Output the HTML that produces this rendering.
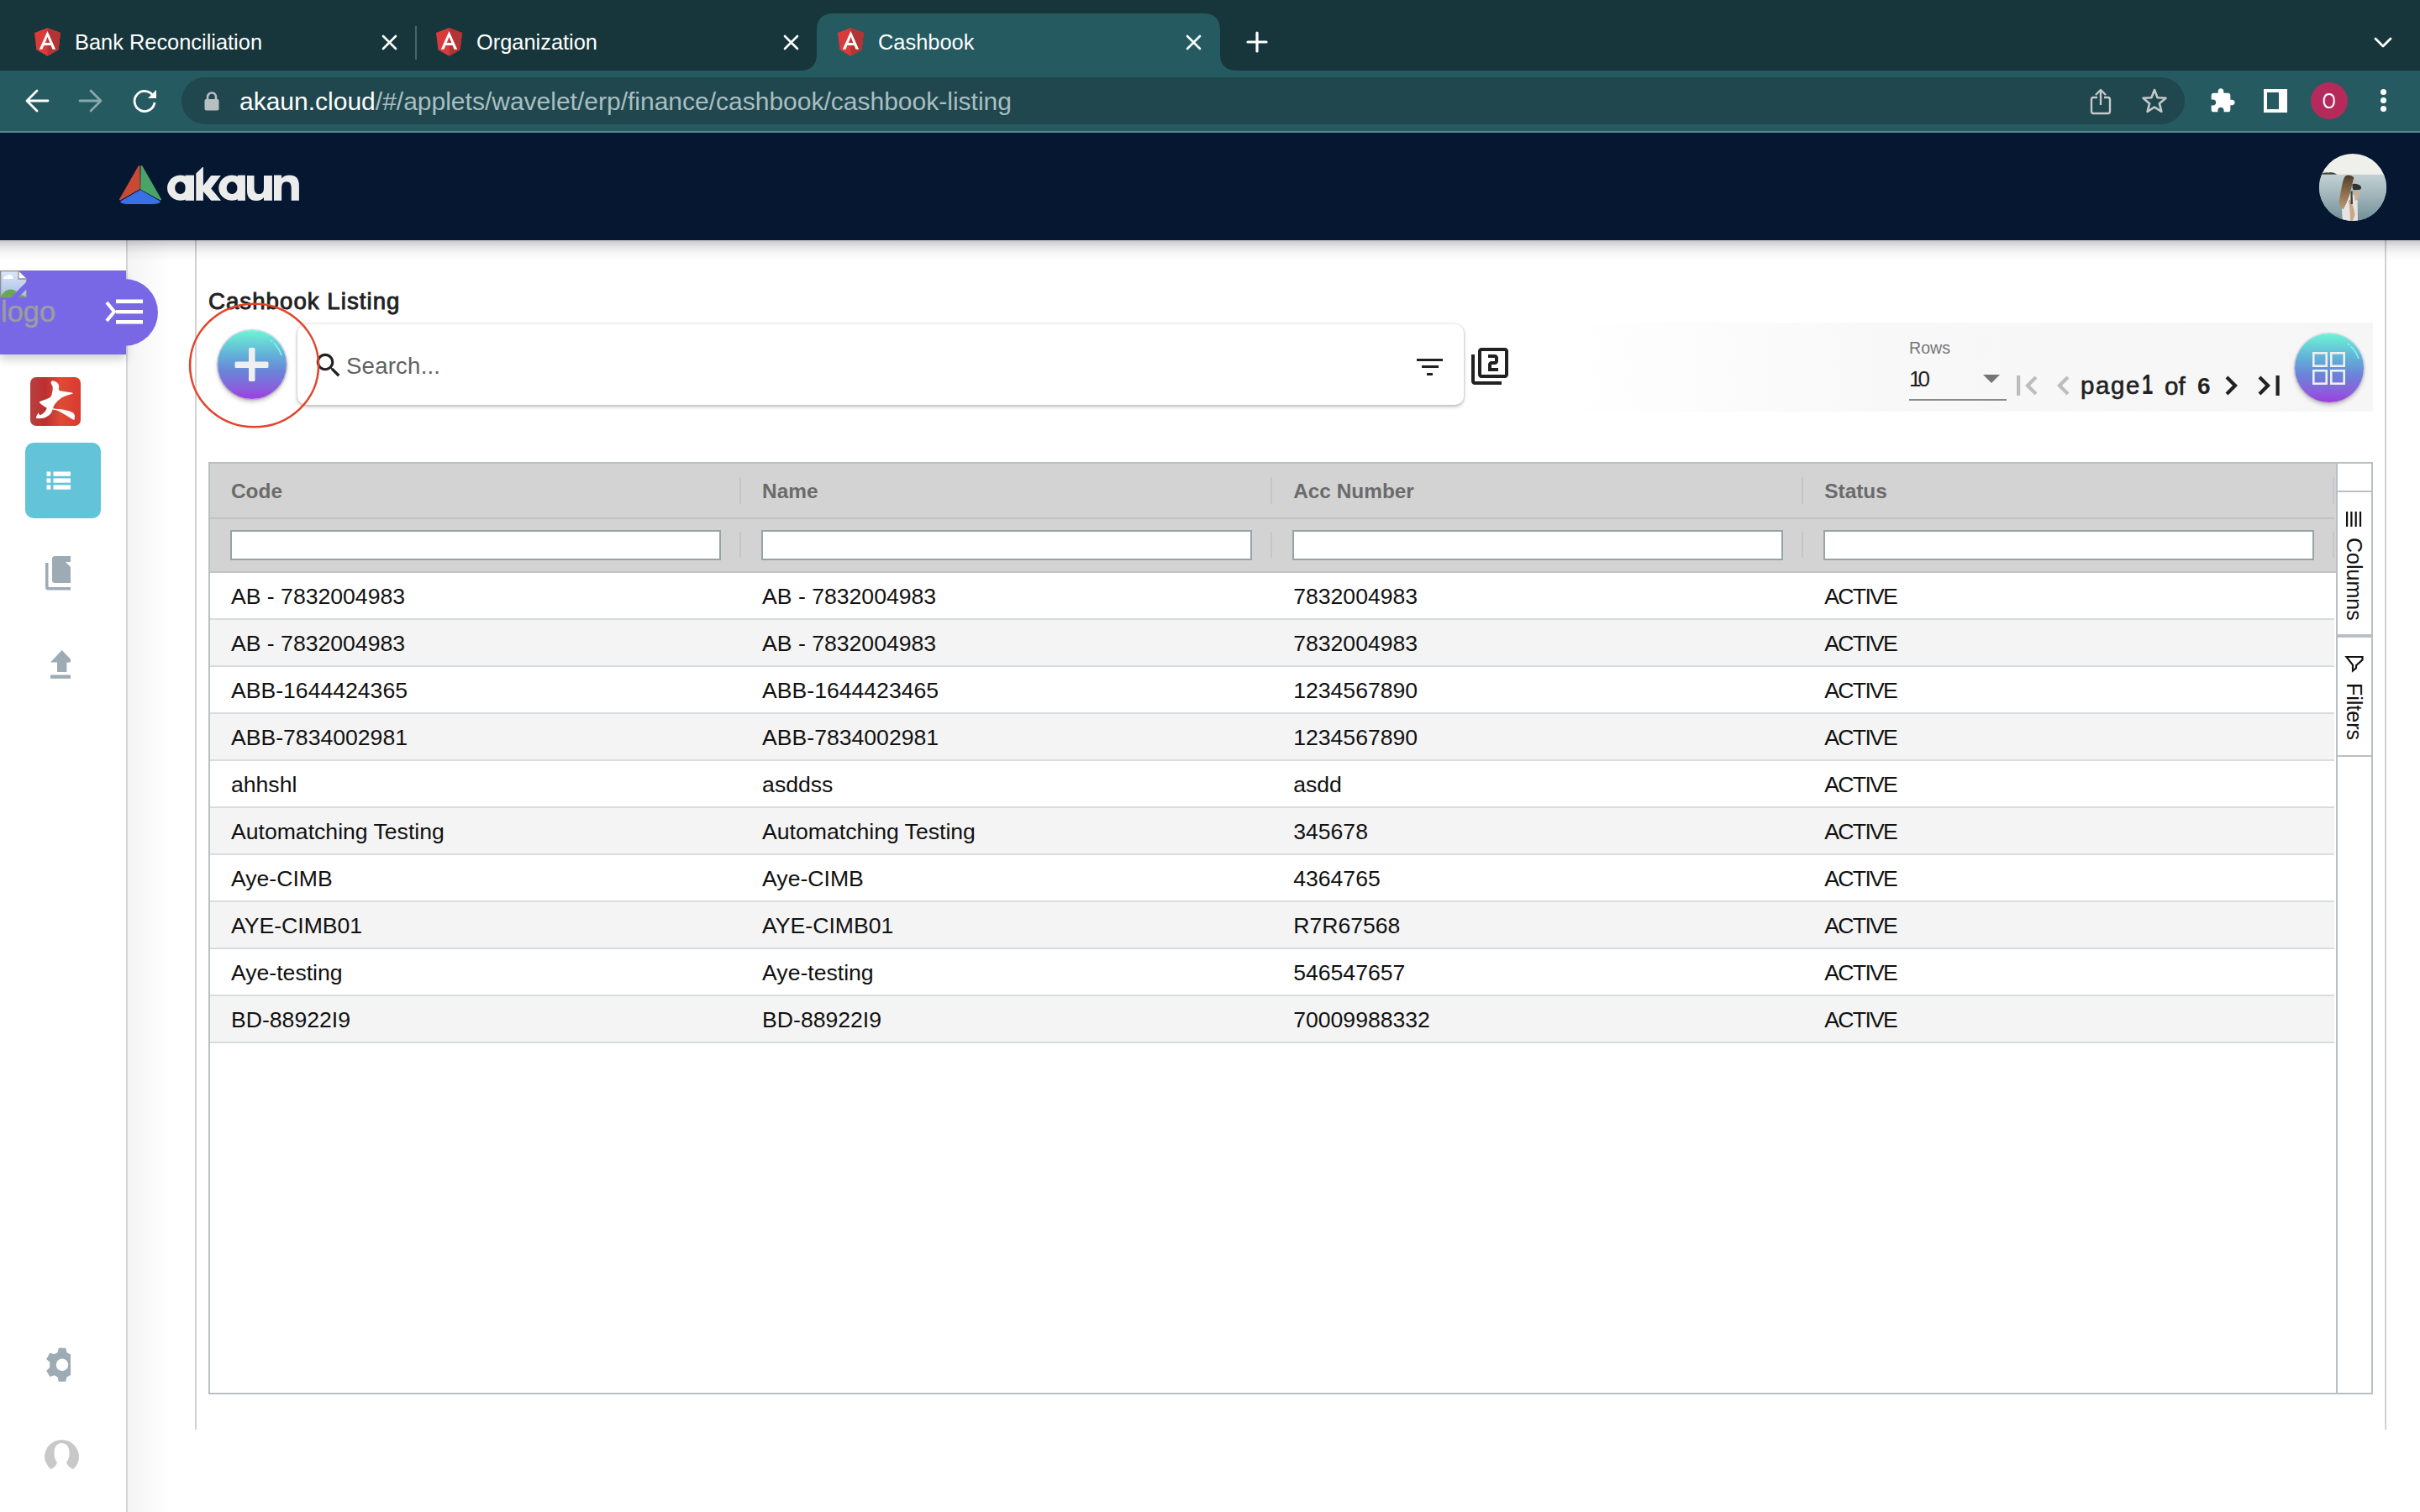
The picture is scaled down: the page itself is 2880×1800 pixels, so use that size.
<!DOCTYPE html>
<html>
<head>
<meta charset="utf-8">
<style>
*{box-sizing:border-box;margin:0;padding:0}
html,body{width:2880px;height:1800px;overflow:hidden;background:#fff;font-family:"Liberation Sans",sans-serif}
.abs{position:absolute}
/* chrome */
#tabbar{left:0;top:0;width:2880px;height:84px;background:#17363b}
#toolbar{left:0;top:84px;width:2880px;height:72px;background:#255a61}
#tbline{left:0;top:156px;width:2880px;height:2px;background:#4f8a90}
.tabtitle{color:#fff;font-size:25.4px;white-space:nowrap;line-height:1}
#urlpill{left:216px;top:92px;width:2384px;height:56px;border-radius:28px;background:#20474e}
#urltext{left:285px;top:106px;font-size:30px;line-height:1;white-space:nowrap;color:#a9bec1}
#urltext b{font-weight:normal;color:#fff}
/* app header */
#apphdr{left:0;top:158px;width:2880px;height:128px;background:#061731}
#hdrshadow{left:0;top:286px;width:2880px;height:26px;background:linear-gradient(rgba(0,0,0,0.22),rgba(0,0,0,0.1) 30%,rgba(0,0,0,0.03) 60%,rgba(0,0,0,0))}
/* sidebar */
#sidebar{left:0;top:286px;width:150px;height:1514px;background:#fff}
#sbborder{left:150px;top:286px;width:2px;height:1514px;background:#d6d6d6}
#sbinner{left:152px;top:286px;width:50px;height:1514px;background:linear-gradient(90deg,#f4f4f4,rgba(255,255,255,0))}
#cardL{left:232px;top:286px;width:2px;height:1416px;background:#d2d2d2}
#cardR{left:2838px;top:286px;width:2px;height:1416px;background:#d2d2d2}
</style>
</head>
<body>
<div class="abs" id="tabbar"></div>
<div class="abs" id="toolbar"></div>
<div class="abs" id="tbline"></div>
<div class="abs" id="urlpill"></div>
<div class="abs" id="urltext"><b>akaun.cloud</b>/#/applets/wavelet/erp/finance/cashbook/cashbook-listing</div>


<!-- active tab -->
<svg class="abs" style="left:952px;top:16px" width="520" height="68" viewBox="0 0 520 68"><path fill="#255a61" d="M0 68 Q20 68 20 48 L20 20 Q20 0 40 0 L480 0 Q500 0 500 20 L500 48 Q500 68 520 68 Z"/></svg>
<svg class="abs" style="left:41px;top:33px" width="31" height="34" viewBox="31.9 30 186.2 200"><polygon fill="#d93b3b" points="125,30 31.9,63.2 46.1,186.3 125,230 203.9,186.3 218.1,63.2"/><polygon fill="#b33434" points="125,30 125,230 203.9,186.3 218.1,63.2"/><path fill="#fff" d="M125,52.1L66.8,182.6h21.7l11.7-29.2h49.4l11.7,29.2H183L125,52.1z M142,135.4H108l17-40.9L142,135.4z"/></svg><svg class="abs" style="left:519px;top:33px" width="31" height="34" viewBox="31.9 30 186.2 200"><polygon fill="#d93b3b" points="125,30 31.9,63.2 46.1,186.3 125,230 203.9,186.3 218.1,63.2"/><polygon fill="#b33434" points="125,30 125,230 203.9,186.3 218.1,63.2"/><path fill="#fff" d="M125,52.1L66.8,182.6h21.7l11.7-29.2h49.4l11.7,29.2H183L125,52.1z M142,135.4H108l17-40.9L142,135.4z"/></svg><svg class="abs" style="left:997px;top:33px" width="31" height="34" viewBox="31.9 30 186.2 200"><polygon fill="#d93b3b" points="125,30 31.9,63.2 46.1,186.3 125,230 203.9,186.3 218.1,63.2"/><polygon fill="#b33434" points="125,30 125,230 203.9,186.3 218.1,63.2"/><path fill="#fff" d="M125,52.1L66.8,182.6h21.7l11.7-29.2h49.4l11.7,29.2H183L125,52.1z M142,135.4H108l17-40.9L142,135.4z"/></svg>
<div class="abs tabtitle" style="left:89px;top:38px">Bank Reconciliation</div>
<div class="abs tabtitle" style="left:567px;top:38px">Organization</div>
<div class="abs tabtitle" style="left:1045px;top:38px">Cashbook</div>
<svg class="abs" style="left:454px;top:41px" width="19" height="19" viewBox="0 0 19 19"><path d="M2 2L17 17M17 2L2 17" stroke="#fff" stroke-width="2.6" stroke-linecap="round"/></svg><svg class="abs" style="left:932px;top:41px" width="19" height="19" viewBox="0 0 19 19"><path d="M2 2L17 17M17 2L2 17" stroke="#fff" stroke-width="2.6" stroke-linecap="round"/></svg><svg class="abs" style="left:1411px;top:41px" width="19" height="19" viewBox="0 0 19 19"><path d="M2 2L17 17M17 2L2 17" stroke="#fff" stroke-width="2.6" stroke-linecap="round"/></svg>
<div class="abs" style="left:494px;top:31px;width:2px;height:40px;background:#4a6469"></div>
<svg class="abs" style="left:1482px;top:37px" width="28" height="26" viewBox="0 0 28 26"><path d="M14 2V24M3 13H25" stroke="#fff" stroke-width="3.2" stroke-linecap="round"/></svg>
<svg class="abs" style="left:2825px;top:43px" width="22" height="15" viewBox="0 0 22 15"><path d="M2 3L11 12L20 3" stroke="#fff" stroke-width="2.8" fill="none" stroke-linecap="round" stroke-linejoin="round"/></svg>
<!-- nav -->
<svg class="abs" style="left:29px;top:105px" width="30" height="30" viewBox="0 0 30 30"><path d="M28 15H4M15 3L3 15L15 27" stroke="#fff" stroke-width="2.8" fill="none" stroke-linecap="round" stroke-linejoin="round"/></svg>
<svg class="abs" style="left:93px;top:105px" width="30" height="30" viewBox="0 0 30 30"><path d="M2 15H26M15 3L27 15L15 27" stroke="#8aa8ac" stroke-width="2.8" fill="none" stroke-linecap="round" stroke-linejoin="round"/></svg>
<svg class="abs" style="left:157px;top:105px" width="32" height="30" viewBox="0 0 32 30"><path d="M25.5 9.5A12 12 0 1 0 27 17" stroke="#fff" stroke-width="2.8" fill="none"/><path d="M29 2V12H19Z" fill="#fff"/></svg>
<svg class="abs" style="left:243px;top:109px" width="18" height="23" viewBox="0 0 18 23"><path d="M4 10V6.5A5 5 0 0 1 14 6.5V10" stroke="#b8bfc2" stroke-width="2.6" fill="none"/><rect x="0.5" y="9" width="17" height="13.5" rx="2" fill="#b8bfc2"/></svg>
<!-- right toolbar icons -->
<svg class="abs" style="left:2487px;top:105px" width="26" height="32" viewBox="0 0 26 32"><path d="M9 11H4.5Q2 11 2 13.5V27.5Q2 30 4.5 30H21.5Q24 30 24 27.5V13.5Q24 11 21.5 11H17" stroke="#c4c9ca" stroke-width="2.4" fill="none"/><path d="M13 20V2M7 8L13 2L19 8" stroke="#c4c9ca" stroke-width="2.4" fill="none" stroke-linejoin="round"/></svg>
<svg class="abs" style="left:2548px;top:104px" width="32" height="32" viewBox="0 0 32 32"><path d="M16 3L19.6 12.2L29.5 12.8L21.9 19.2L24.4 28.8L16 23.5L7.6 28.8L10.1 19.2L2.5 12.8L12.4 12.2Z" stroke="#c4c9ca" stroke-width="2.6" fill="none" stroke-linejoin="round"/></svg>
<svg class="abs" style="left:2629px;top:104px" width="32" height="32" viewBox="0 0 24 24"><path fill="#fff" d="M20.5 11H19V7c0-1.1-.9-2-2-2h-4V3.5C13 2.12 11.88 1 10.5 1S8 2.12 8 3.5V5H4c-1.1 0-1.99.9-1.99 2v3.8H3.5c1.49 0 2.7 1.21 2.7 2.7s-1.21 2.7-2.7 2.7H2V20c0 1.1.9 2 2 2h3.8v-1.5c0-1.49 1.21-2.7 2.7-2.7 1.49 0 2.7 1.21 2.7 2.7V22H17c1.1 0 2-.9 2-2v-4h1.5c1.38 0 2.5-1.12 2.5-2.5S21.88 11 20.5 11z"/></svg>
<div class="abs" style="left:2694px;top:106px;width:28px;height:28px;border:4px solid #fff;background:#255a61"></div>
<div class="abs" style="left:2712px;top:106px;width:10px;height:28px;background:#fff"></div>
<div class="abs" style="left:2750px;top:98px;width:44px;height:44px;border-radius:50%;background:#b52a5b;color:#fff;font-size:25px;line-height:44px;text-align:center"><span style="display:inline-block;transform:scaleX(0.82)">O</span></div>
<div class="abs" style="left:2833px;top:106px;width:7px;height:7px;border-radius:50%;background:#fff"></div>
<div class="abs" style="left:2833px;top:116px;width:7px;height:7px;border-radius:50%;background:#fff"></div>
<div class="abs" style="left:2833px;top:126px;width:7px;height:7px;border-radius:50%;background:#fff"></div>

<div class="abs" id="apphdr"></div>
<svg class="abs" style="left:135px;top:190px" width="232" height="60" viewBox="0 0 232 60">
<path fill="#c64a35" stroke="#c64a35" stroke-width="2" stroke-linejoin="round" d="M30.5 8 L8 47.5 L30.8 34.3 Z"/>
<path fill="#4aa468" stroke="#4aa468" stroke-width="2" stroke-linejoin="round" d="M33.5 8 L56 47.5 L33.2 34.8 Z"/>
<path fill="#3870e5" stroke="#3870e5" stroke-width="2.4" stroke-linejoin="round" d="M9.5 50.2 L32 37.2 L54.5 50.2 Q52 51.8 48 51.8 L16 51.8 Q12 51.8 9.5 50.2 Z"/>
<g transform="translate(60,0)" fill="#ececec">
<path fill-rule="evenodd" d="M35.6 33.7 A15.8 15.1 0 1 1 35.6 33.69 Z M26 33.7 A6.4 7.4 0 1 0 26 33.71 Z"/>
<rect x="25.6" y="18.6" width="10.4" height="30.2"/>
<path d="M38.3 16.5 L46 9 L46.9 9 L46.9 30.9 L56.2 19 L67.8 19 L56.2 34.4 L68.1 48.8 L56.2 48.8 L46.9 37.9 L46.9 48.8 L38.3 48.8 Z"/>
<path fill-rule="evenodd" d="M96.8 33.7 A15.8 15.1 0 1 1 96.8 33.69 Z M87.5 33.7 A6.4 7.4 0 1 0 87.5 33.71 Z"/>
<rect x="87.8" y="18.6" width="9.1" height="30.2"/>
<path d="M99 18.9 H107.5 V34 Q107.5 41.1 113.3 41.1 Q119 41.1 119 34 V18.9 H128.9 V48.8 H119 V45 Q116 49 110 49 Q99 49 99 37 Z"/>
<path d="M131 48.8 V18.6 H140.1 V22.5 Q143 18.6 149.5 18.6 Q160.9 18.6 160.9 31 V48.8 H151.7 V33.5 Q151.7 26.3 146 26.3 Q140.1 26.3 140.1 33.5 V48.8 Z"/>
</g>
</svg>
<svg class="abs" style="left:2760px;top:183px" width="80" height="80" viewBox="0 0 80 80">
<defs><clipPath id="avc"><circle cx="40" cy="40" r="40"/></clipPath>
<linearGradient id="sea" x1="0" y1="0" x2="0" y2="1"><stop offset="0" stop-color="#c3d1d4"/><stop offset="0.45" stop-color="#9fb5ba"/><stop offset="1" stop-color="#6f8e96"/></linearGradient>
<linearGradient id="hair" x1="0" y1="0" x2="0" y2="1"><stop offset="0" stop-color="#4f3e2e"/><stop offset="0.5" stop-color="#8c6d4c"/><stop offset="1" stop-color="#b89a74"/></linearGradient></defs>
<g clip-path="url(#avc)">
<rect width="80" height="80" fill="#efefec"/>
<rect y="24.8" width="80" height="56" fill="url(#sea)"/>
<path d="M2 24.8 Q5 21.5 11 22.5 Q16 21 21.5 24.8 Z" fill="#3e4b45"/>
<path d="M28.3 48 L36 46 Q42 48 45.6 56 L46 80 L28 80 Q26 62 28.3 48Z" fill="#e6e4e1"/>
<path d="M36.7 54.5 Q41 62 42.6 72.4 L40 80 L37 80 Q37 66 35 56Z" fill="#c9a58a"/>
<path d="M42.6 42 Q47 44 47.4 50 Q46 55 43 56 Q41 50 42.6 42Z" fill="#d1ae92"/>
<path d="M39 30 Q42.5 31 42.6 36.7 L40 38 Q38.5 34 39 30Z" fill="#d7b59a"/>
<path d="M31.9 26 Q38 24.5 41.4 28.3 Q40 33 38.5 40 Q36 52 31 62 Q28.5 66.5 28.3 66.4 Q23.5 62 23.6 58 Q26 42 28.5 32 Q29.5 27.5 31.9 26Z" fill="url(#hair)"/>
<path d="M39.6 36 Q44 35 47 37 Q50 37.5 50 41 Q49.5 43.2 47 43 L41 43.2 Q39 41 39.6 36Z" fill="#2d3235"/>
<path d="M37.5 45 L39.5 44 L40 60 L37.5 60Z" fill="#3b4040"/>
</g></svg>

<div class="abs" id="sidebar"></div>
<div class="abs" id="sbinner"></div>
<div class="abs" id="sbborder"></div>

<!-- sidebar content -->
<div class="abs" style="left:0;top:322px;width:150px;height:100px;background:#7868e5;box-shadow:0 6px 10px rgba(0,0,0,0.18)"></div>
<div class="abs" style="left:108px;top:332px;width:80px;height:80px;border-radius:50%;background:#7868e5"></div>
<svg class="abs" style="left:0;top:322px" width="33" height="33" viewBox="0 0 33 33">
<defs><linearGradient id="bimg" x1="0" y1="0" x2="0" y2="1"><stop offset="0" stop-color="#dbe6f8"/><stop offset="1" stop-color="#a9c0e8"/></linearGradient></defs>
<path d="M0.7 0.7H22L31.5 10V31.5H0.7Z" fill="url(#bimg)" stroke="#8f8f8f" stroke-width="1.3"/>
<path d="M22 0.7V10H31.5" fill="#fff" stroke="#8f8f8f" stroke-width="1.3"/>
<path d="M4 10 Q4 6.5 8 6.5 Q10 4 13 5.5 Q16 6 15.5 10 Z" fill="#fff"/>
<path d="M0.7 31.5 Q8 18 20 25 L14 31.5Z" fill="#6aa84f"/>
<path d="M22 31.5 Q26 27 30 31.5Z" fill="#6aa84f"/>
<path d="M12 33L33 12V21L21 33Z" fill="#7868e5"/>
</svg>
<div class="abs" style="left:1px;top:351px;font-size:34.5px;line-height:40px;color:#9a9da3;white-space:nowrap;-webkit-text-stroke:0.5px #9a9da3">logo</div>
<svg class="abs" style="left:124px;top:354px" width="48" height="34" viewBox="0 0 48 34">
<path d="M3 6L12 17L3 28" stroke="#fff" stroke-width="4" fill="none"/>
<rect x="14" y="2.5" width="32" height="4.6" fill="#fff"/>
<rect x="14" y="15" width="32" height="4.4" fill="#fff"/>
<rect x="14" y="27" width="32" height="4.6" fill="#fff"/>
</svg>
<svg class="abs" style="left:36px;top:449px" width="60" height="58" viewBox="0 0 60 58">
<defs><linearGradient id="redg" x1="0" y1="0" x2="1" y2="0"><stop offset="0" stop-color="#b94040"/><stop offset="0.3" stop-color="#bb3030"/><stop offset="0.6" stop-color="#de4b35"/><stop offset="1" stop-color="#d93a30"/></linearGradient></defs>
<rect width="60" height="58" rx="7" fill="url(#redg)"/>
<path fill="#fff" d="M24.5 5.8 Q25.5 3.8 28 4.4 Q32.5 5.5 34 9.5 Q34.5 12 33.8 15.3 Q35 16.5 38 16.8 L49.9 18.4 Q51.5 19 50.2 19.8 Q43 21.5 38 24 Q32 28 29 32.5 Q27.5 35 27.2 37.3 Q30 37.8 34 38 Q44 39 49.9 41.8 Q53 43.5 53 47 L52.6 50.6 Q51 50.8 49.9 49.9 Q43 45.5 38.4 43 Q34 40 30 38.9 Q28 39 26.5 38.6 Q25.8 41.5 24.5 43.3 Q22 46.5 17 48.5 Q12 49.5 7.7 49.1 Q6.5 48.5 7 47.2 L9.6 42.6 L11.5 45.6 Q14.5 44 16.9 41.8 Q19 39 19.9 36.8 Q16 34.5 13 32.2 Q11 30.5 10.7 29.5 Q11.5 28.6 12.7 28.4 Q19 26.5 23 24.5 Q25 23 25.5 21 Q26.5 17 26.8 14 Q26.8 11 26.2 10 Q24.5 8 24.5 5.8Z"/></svg>
<div class="abs" style="left:30px;top:527px;width:90px;height:90px;border-radius:10px;background:#62c3d9"></div>
<svg class="abs" style="left:55px;top:561px" width="30" height="22" viewBox="0 0 30 22">
<rect x="0.5" y="0.5" width="4.8" height="5.3" fill="#fff"/><rect x="8.5" y="0.5" width="20.5" height="5.3" fill="#fff"/>
<rect x="0.5" y="8.4" width="4.8" height="5.3" fill="#fff"/><rect x="8.5" y="8.4" width="20.5" height="5.3" fill="#fff"/>
<rect x="0.5" y="16.4" width="4.8" height="5.3" fill="#fff"/><rect x="8.5" y="16.4" width="20.5" height="5.3" fill="#fff"/>
</svg>
<svg class="abs" style="left:54px;top:662px" width="30" height="41" viewBox="0 0 30 41">
<path d="M0 8H3.5V36Q3.5 37 4.5 37H30V40.5H3.5Q0 40.5 0 37Z" fill="#9dabb5"/>
<path d="M8 3.5Q8 0 11.5 0H30V32H11.5Q8 32 8 28.5Z" fill="#9dabb5"/>
<path d="M24 7L30 13V7Z" fill="#fff"/>
</svg>
<svg class="abs" style="left:60px;top:774px" width="24" height="34" viewBox="0 0 24 34">
<path d="M13.7 0L27.5 14.5H19.4V26H8V14.5H0Z" fill="#9dabb5"/>
<rect x="0" y="29.5" width="24" height="4.3" fill="#9dabb5"/>
</svg>
<svg class="abs" style="left:54px;top:1604px" width="30" height="41" viewBox="0 0 30 41">
<g transform="translate(20,20.8)"><path fill="#9dabb5" fill-rule="evenodd" d="M-4.2-20H4.2L5.4-14.8L9.4-12.5L14.6-14.2L18.8-6.9L14.8-3.2V3.2L18.8 6.9L14.6 14.2L9.4 12.5L5.4 14.8L4.2 20H-4.2L-5.4 14.8L-9.4 12.5L-14.6 14.2L-18.8 6.9L-14.8 3.2V-3.2L-18.8-6.9L-14.6-14.2L-9.4-12.5L-5.4-14.8Z M7.2 0A7.2 7.2 0 1 0 7.2 0.01Z"/></g>
</svg>
<svg class="abs" style="left:53px;top:1714px" width="42" height="36" viewBox="0 0 42 36">
<path fill="#c8c8c8" d="M7 35 Q0 27 0 20.5 A20.5 20.5 0 0 1 41 20.5 Q41 28 34.5 35 Q28 33 26 27 Q31 21 29 11 Q27 4 20.5 4 Q14 4 12 11 Q10 21 15 27 Q13 33 7 35Z"/>
</svg>

<div class="abs" id="cardL"></div>
<div class="abs" id="cardR"></div>

<!-- main content -->
<div class="abs" style="left:248px;top:344px;font-size:27.6px;color:#212121;line-height:30px;white-space:nowrap;letter-spacing:1.05px;-webkit-text-stroke:0.9px #212121">Cashbook Listing</div>
<!-- search box -->
<div class="abs" style="left:354px;top:386px;width:1388px;height:96px;border-radius:10px;background:#fff;box-shadow:0 2px 4px rgba(0,0,0,0.26),0 0 3px rgba(0,0,0,0.14)"></div>
<svg class="abs" style="left:372px;top:416px" width="38" height="38" viewBox="0 0 24 24"><path fill="#212121" d="M15.5 14h-.79l-.28-.27C15.41 12.59 16 11.11 16 9.5 16 5.91 13.09 3 9.5 3S3 5.91 3 9.5 5.91 16 9.5 16c1.61 0 3.09-.59 4.23-1.57l.27.28v.79l5 4.99L20.49 19l-4.99-5zm-6 0C7.01 14 5 11.99 5 9.5S7.01 5 9.5 5 14 7.01 14 9.5 11.99 14 9.5 14z"/></svg>
<div class="abs" style="left:412px;top:420.5px;font-size:27.6px;letter-spacing:0.2px;color:#616161;line-height:30px;white-space:nowrap">Search...</div>
<div class="abs" style="left:1686px;top:427px;width:31px;height:3.2px;background:#212121"></div>
<div class="abs" style="left:1691.5px;top:435.3px;width:20px;height:3.2px;background:#212121"></div>
<div class="abs" style="left:1698px;top:443.6px;width:7px;height:3.2px;background:#212121"></div>
<svg class="abs" style="left:1749px;top:412px" width="48" height="48" viewBox="0 0 24 24"><path fill="#212121" d="M3 5H1v16c0 1.1.9 2 2 2h16v-2H3V5zm18-4H7c-1.1 0-2 .9-2 2v14c0 1.1.9 2 2 2h14c1.1 0 2-.9 2-2V3c0-1.1-.9-2-2-2zm0 16H7V3h14v14zm-4-4h-4v-2h2c1.100 0 2-.89 2-2V7c0-1.11-.9-2-2-2h-4v2h4v2h-2c-1.1 0-2 .89-2 2v4h6v-2z"/></svg>
<!-- plus button -->
<div class="abs" style="left:259px;top:393px;width:82px;height:82px;border-radius:50%;background:linear-gradient(180deg,#6ff5d5 0%,#62b2d8 35%,#6a84d8 60%,#8a5fdc 85%,#9d3de0 100%);box-shadow:0 3px 5px rgba(0,0,0,0.25),0 0 0 1.5px #e6dcef"></div>
<svg class="abs" style="left:259px;top:393px" width="82" height="82" viewBox="0 0 82 82">
<path d="M63 12 A38 38 0 0 1 76 30" stroke="#8af0f0" stroke-width="1.6" fill="none" stroke-dasharray="3 2 40"/>
<rect x="20.5" y="37.5" width="40" height="7.5" rx="1.5" fill="#efefef"/>
<rect x="37" y="21" width="7.5" height="40" rx="1.5" fill="#efefef"/>
</svg>
<svg class="abs" style="left:222px;top:358px" width="162" height="154" viewBox="0 0 162 154"><ellipse cx="80.6" cy="77" rx="76.5" ry="73.3" stroke="#e2442b" stroke-width="2.6" fill="none"/></svg>
<!-- pagination -->
<div class="abs" style="left:1860px;top:384px;width:964px;height:106px;background:linear-gradient(90deg,rgba(246,246,246,0) 0%,#f8f8f8 40%,#f6f6f6 100%)"></div>
<div class="abs" style="left:2272px;top:402px;font-size:19.6px;color:#757575;line-height:24px;white-space:nowrap">Rows</div>
<div class="abs" style="left:2272px;top:436px;font-size:26px;color:#212121;line-height:30px;letter-spacing:-4px;white-space:nowrap">10</div>
<svg class="abs" style="left:2359px;top:445px" width="22" height="12" viewBox="0 0 22 12"><path d="M1 1H21L11 11Z" fill="#757575"/></svg>
<div class="abs" style="left:2272px;top:475px;width:116px;height:2px;background:#8a8a8a"></div>
<svg class="abs" style="left:2398px;top:445px" width="30" height="28" viewBox="0 0 30 28"><rect x="2" y="2" width="4.2" height="24" fill="#bdbdbd"/><path d="M25 4L15 14L25 24" stroke="#bdbdbd" stroke-width="4.2" fill="none"/></svg>
<svg class="abs" style="left:2445px;top:445px" width="20" height="28" viewBox="0 0 20 28"><path d="M16 4L6 14L16 24" stroke="#bdbdbd" stroke-width="4.2" fill="none"/></svg>
<div class="abs" style="left:2476px;top:442px;font-size:29.5px;color:#212121;line-height:34px;white-space:nowrap;letter-spacing:1.6px;-webkit-text-stroke:0.6px #212121">page</div>
<div class="abs" style="left:2549px;top:440px;font-size:33px;font-weight:bold;color:#212121;line-height:36px;white-space:nowrap;transform:scaleX(0.72);transform-origin:0 0">1</div>
<div class="abs" style="left:2576px;top:442.5px;font-size:29.5px;color:#212121;line-height:34px;white-space:nowrap;-webkit-text-stroke:0.6px #212121">of</div>
<div class="abs" style="left:2615px;top:443px;font-size:28px;font-weight:bold;color:#212121;line-height:34px;white-space:nowrap">6</div>
<svg class="abs" style="left:2646px;top:445px" width="20" height="28" viewBox="0 0 20 28"><path d="M4 4L14 14L4 24" stroke="#212121" stroke-width="4.2" fill="none"/></svg>
<svg class="abs" style="left:2685px;top:445px" width="30" height="28" viewBox="0 0 30 28"><path d="M4 4L14 14L4 24" stroke="#212121" stroke-width="4.2" fill="none"/><rect x="23.5" y="2" width="4.2" height="24" fill="#212121"/></svg>
<!-- grid button -->
<div class="abs" style="left:2731px;top:397px;width:82px;height:82px;border-radius:50%;background:linear-gradient(180deg,#6ff5d5 0%,#62b2d8 35%,#6a84d8 60%,#8a5fdc 85%,#9d3de0 100%);box-shadow:0 3px 5px rgba(0,0,0,0.25),0 0 0 1.5px #e6dcef"></div>
<svg class="abs" style="left:2731px;top:397px" width="82" height="82" viewBox="0 0 82 82">
<path d="M63 12 A38 38 0 0 1 76 30" stroke="#8af0f0" stroke-width="1.6" fill="none" stroke-dasharray="3 2 40"/>
<g stroke="#efefef" stroke-width="2.6" fill="none"><rect x="22.3" y="23.3" width="15.4" height="15.4"/><rect x="43.3" y="23.3" width="15.4" height="15.4"/><rect x="22.3" y="44.3" width="15.4" height="15.4"/><rect x="43.3" y="44.3" width="15.4" height="15.4"/></g>
</svg>
<!-- table -->
<div class="abs" style="left:248px;top:550px;width:2576px;height:1110px;border:2px solid #babfc4;background:#fff"></div>
<div class="abs" style="left:250px;top:552px;width:2530px;height:128px;background:#d3d3d3"></div>
<div class="abs" style="left:250px;top:616px;width:2528px;height:2px;background:#bdc3c7"></div>
<div class="abs" style="left:250px;top:680px;width:2530px;height:2px;background:#bdc3c7"></div>
<div class="abs" style="left:275.0px;top:570.5px;font-size:24.4px;font-weight:bold;color:#6b6b6b;line-height:28px;white-space:nowrap">Code</div>
<div class="abs" style="left:274.0px;top:631px;width:584.1px;height:36px;border:2px solid #95a5a6;background:#fff"></div>
<div class="abs" style="left:880.1px;top:568px;width:2px;height:32px;background:#c2c6ca"></div>
<div class="abs" style="left:880.1px;top:633px;width:2px;height:31px;background:#c2c6ca"></div>
<div class="abs" style="left:907.1px;top:570.5px;font-size:24.4px;font-weight:bold;color:#6b6b6b;line-height:28px;white-space:nowrap">Name</div>
<div class="abs" style="left:906.1px;top:631px;width:584.1px;height:36px;border:2px solid #95a5a6;background:#fff"></div>
<div class="abs" style="left:1512.2px;top:568px;width:2px;height:32px;background:#c2c6ca"></div>
<div class="abs" style="left:1512.2px;top:633px;width:2px;height:31px;background:#c2c6ca"></div>
<div class="abs" style="left:1539.2px;top:570.5px;font-size:24.4px;font-weight:bold;color:#6b6b6b;line-height:28px;white-space:nowrap">Acc Number</div>
<div class="abs" style="left:1538.2px;top:631px;width:584.1px;height:36px;border:2px solid #95a5a6;background:#fff"></div>
<div class="abs" style="left:2144.3px;top:568px;width:2px;height:32px;background:#c2c6ca"></div>
<div class="abs" style="left:2144.3px;top:633px;width:2px;height:31px;background:#c2c6ca"></div>
<div class="abs" style="left:2171.3px;top:570.5px;font-size:24.4px;font-weight:bold;color:#6b6b6b;line-height:28px;white-space:nowrap">Status</div>
<div class="abs" style="left:2170.3px;top:631px;width:584.1px;height:36px;border:2px solid #95a5a6;background:#fff"></div>
<div class="abs" style="left:2776.4px;top:568px;width:2px;height:32px;background:#c2c6ca"></div>
<div class="abs" style="left:2776.4px;top:633px;width:2px;height:31px;background:#c2c6ca"></div>
<div class="abs" style="left:250px;top:682px;width:2528px;height:56px;background:#fff;border-bottom:2px solid #d9dcdf"></div>
<div class="abs" style="left:275.0px;top:683px;font-size:26.6px;color:#111;line-height:55px;white-space:nowrap">AB - 7832004983</div>
<div class="abs" style="left:907.1px;top:683px;font-size:26.6px;color:#111;line-height:55px;white-space:nowrap">AB - 7832004983</div>
<div class="abs" style="left:1539.2px;top:683px;font-size:26.6px;color:#111;line-height:55px;white-space:nowrap">7832004983</div>
<div class="abs" style="left:2171.3px;top:683px;font-size:26.6px;color:#111;line-height:54px;white-space:nowrap;letter-spacing:-1.7px">ACTIVE</div>
<div class="abs" style="left:250px;top:738px;width:2528px;height:56px;background:#f4f4f4;border-bottom:2px solid #d9dcdf"></div>
<div class="abs" style="left:275.0px;top:739px;font-size:26.6px;color:#111;line-height:55px;white-space:nowrap">AB - 7832004983</div>
<div class="abs" style="left:907.1px;top:739px;font-size:26.6px;color:#111;line-height:55px;white-space:nowrap">AB - 7832004983</div>
<div class="abs" style="left:1539.2px;top:739px;font-size:26.6px;color:#111;line-height:55px;white-space:nowrap">7832004983</div>
<div class="abs" style="left:2171.3px;top:739px;font-size:26.6px;color:#111;line-height:54px;white-space:nowrap;letter-spacing:-1.7px">ACTIVE</div>
<div class="abs" style="left:250px;top:794px;width:2528px;height:56px;background:#fff;border-bottom:2px solid #d9dcdf"></div>
<div class="abs" style="left:275.0px;top:795px;font-size:26.6px;color:#111;line-height:55px;white-space:nowrap">ABB-1644424365</div>
<div class="abs" style="left:907.1px;top:795px;font-size:26.6px;color:#111;line-height:55px;white-space:nowrap">ABB-1644423465</div>
<div class="abs" style="left:1539.2px;top:795px;font-size:26.6px;color:#111;line-height:55px;white-space:nowrap">1234567890</div>
<div class="abs" style="left:2171.3px;top:795px;font-size:26.6px;color:#111;line-height:54px;white-space:nowrap;letter-spacing:-1.7px">ACTIVE</div>
<div class="abs" style="left:250px;top:850px;width:2528px;height:56px;background:#f4f4f4;border-bottom:2px solid #d9dcdf"></div>
<div class="abs" style="left:275.0px;top:851px;font-size:26.6px;color:#111;line-height:55px;white-space:nowrap">ABB-7834002981</div>
<div class="abs" style="left:907.1px;top:851px;font-size:26.6px;color:#111;line-height:55px;white-space:nowrap">ABB-7834002981</div>
<div class="abs" style="left:1539.2px;top:851px;font-size:26.6px;color:#111;line-height:55px;white-space:nowrap">1234567890</div>
<div class="abs" style="left:2171.3px;top:851px;font-size:26.6px;color:#111;line-height:54px;white-space:nowrap;letter-spacing:-1.7px">ACTIVE</div>
<div class="abs" style="left:250px;top:906px;width:2528px;height:56px;background:#fff;border-bottom:2px solid #d9dcdf"></div>
<div class="abs" style="left:275.0px;top:907px;font-size:26.6px;color:#111;line-height:55px;white-space:nowrap">ahhshl</div>
<div class="abs" style="left:907.1px;top:907px;font-size:26.6px;color:#111;line-height:55px;white-space:nowrap">asddss</div>
<div class="abs" style="left:1539.2px;top:907px;font-size:26.6px;color:#111;line-height:55px;white-space:nowrap">asdd</div>
<div class="abs" style="left:2171.3px;top:907px;font-size:26.6px;color:#111;line-height:54px;white-space:nowrap;letter-spacing:-1.7px">ACTIVE</div>
<div class="abs" style="left:250px;top:962px;width:2528px;height:56px;background:#f4f4f4;border-bottom:2px solid #d9dcdf"></div>
<div class="abs" style="left:275.0px;top:963px;font-size:26.6px;color:#111;line-height:55px;white-space:nowrap">Automatching Testing</div>
<div class="abs" style="left:907.1px;top:963px;font-size:26.6px;color:#111;line-height:55px;white-space:nowrap">Automatching Testing</div>
<div class="abs" style="left:1539.2px;top:963px;font-size:26.6px;color:#111;line-height:55px;white-space:nowrap">345678</div>
<div class="abs" style="left:2171.3px;top:963px;font-size:26.6px;color:#111;line-height:54px;white-space:nowrap;letter-spacing:-1.7px">ACTIVE</div>
<div class="abs" style="left:250px;top:1018px;width:2528px;height:56px;background:#fff;border-bottom:2px solid #d9dcdf"></div>
<div class="abs" style="left:275.0px;top:1019px;font-size:26.6px;color:#111;line-height:55px;white-space:nowrap">Aye-CIMB</div>
<div class="abs" style="left:907.1px;top:1019px;font-size:26.6px;color:#111;line-height:55px;white-space:nowrap">Aye-CIMB</div>
<div class="abs" style="left:1539.2px;top:1019px;font-size:26.6px;color:#111;line-height:55px;white-space:nowrap">4364765</div>
<div class="abs" style="left:2171.3px;top:1019px;font-size:26.6px;color:#111;line-height:54px;white-space:nowrap;letter-spacing:-1.7px">ACTIVE</div>
<div class="abs" style="left:250px;top:1074px;width:2528px;height:56px;background:#f4f4f4;border-bottom:2px solid #d9dcdf"></div>
<div class="abs" style="left:275.0px;top:1075px;font-size:26.6px;color:#111;line-height:55px;white-space:nowrap">AYE-CIMB01</div>
<div class="abs" style="left:907.1px;top:1075px;font-size:26.6px;color:#111;line-height:55px;white-space:nowrap">AYE-CIMB01</div>
<div class="abs" style="left:1539.2px;top:1075px;font-size:26.6px;color:#111;line-height:55px;white-space:nowrap">R7R67568</div>
<div class="abs" style="left:2171.3px;top:1075px;font-size:26.6px;color:#111;line-height:54px;white-space:nowrap;letter-spacing:-1.7px">ACTIVE</div>
<div class="abs" style="left:250px;top:1130px;width:2528px;height:56px;background:#fff;border-bottom:2px solid #d9dcdf"></div>
<div class="abs" style="left:275.0px;top:1131px;font-size:26.6px;color:#111;line-height:55px;white-space:nowrap">Aye-testing</div>
<div class="abs" style="left:907.1px;top:1131px;font-size:26.6px;color:#111;line-height:55px;white-space:nowrap">Aye-testing</div>
<div class="abs" style="left:1539.2px;top:1131px;font-size:26.6px;color:#111;line-height:55px;white-space:nowrap">546547657</div>
<div class="abs" style="left:2171.3px;top:1131px;font-size:26.6px;color:#111;line-height:54px;white-space:nowrap;letter-spacing:-1.7px">ACTIVE</div>
<div class="abs" style="left:250px;top:1186px;width:2528px;height:56px;background:#f4f4f4;border-bottom:2px solid #d9dcdf"></div>
<div class="abs" style="left:275.0px;top:1187px;font-size:26.6px;color:#111;line-height:55px;white-space:nowrap">BD-88922I9</div>
<div class="abs" style="left:907.1px;top:1187px;font-size:26.6px;color:#111;line-height:55px;white-space:nowrap">BD-88922I9</div>
<div class="abs" style="left:1539.2px;top:1187px;font-size:26.6px;color:#111;line-height:55px;white-space:nowrap">70009988332</div>
<div class="abs" style="left:2171.3px;top:1187px;font-size:26.6px;color:#111;line-height:54px;white-space:nowrap;letter-spacing:-1.7px">ACTIVE</div>

<div class="abs" style="left:2780px;top:552px;width:2px;height:1106px;background:#babfc4"></div>
<div class="abs" style="left:2782px;top:584px;width:40px;height:2px;background:#babfc4"></div>
<div class="abs" style="left:2782px;top:755px;width:40px;height:4px;background:#babfc4"></div>
<div class="abs" style="left:2782px;top:899px;width:40px;height:2px;background:#babfc4"></div>
<svg class="abs" style="left:2790px;top:607px" width="24" height="22" viewBox="0 0 24 22"><g fill="#111"><rect x="2" y="2" width="2.2" height="18"/><rect x="7.3" y="2" width="2.2" height="18"/><rect x="12.6" y="2" width="2.2" height="18"/><rect x="17.9" y="2" width="2.2" height="18"/></g></svg>
<div class="abs" style="left:2789px;top:640px;width:26px;height:100px"><div style="position:absolute;left:26px;top:0;transform-origin:0 0;transform:rotate(90deg);font-size:25px;line-height:26px;color:#111;white-space:nowrap">Columns</div></div>
<svg class="abs" style="left:2789px;top:779px" width="26" height="22" viewBox="0 0 26 22"><path d="M3.5 3L22.5 3L22.5 6.5L15 13.2L15 16.3L11 19.5L11 12.6Z" stroke="#111" stroke-width="2.2" fill="none" stroke-linejoin="miter"/></svg>
<div class="abs" style="left:2789px;top:813px;width:26px;height:80px"><div style="position:absolute;left:26px;top:0;transform-origin:0 0;transform:rotate(90deg);font-size:25px;line-height:26px;color:#111;white-space:nowrap">Filters</div></div>

<div class="abs" id="hdrshadow"></div>

</body>
</html>
